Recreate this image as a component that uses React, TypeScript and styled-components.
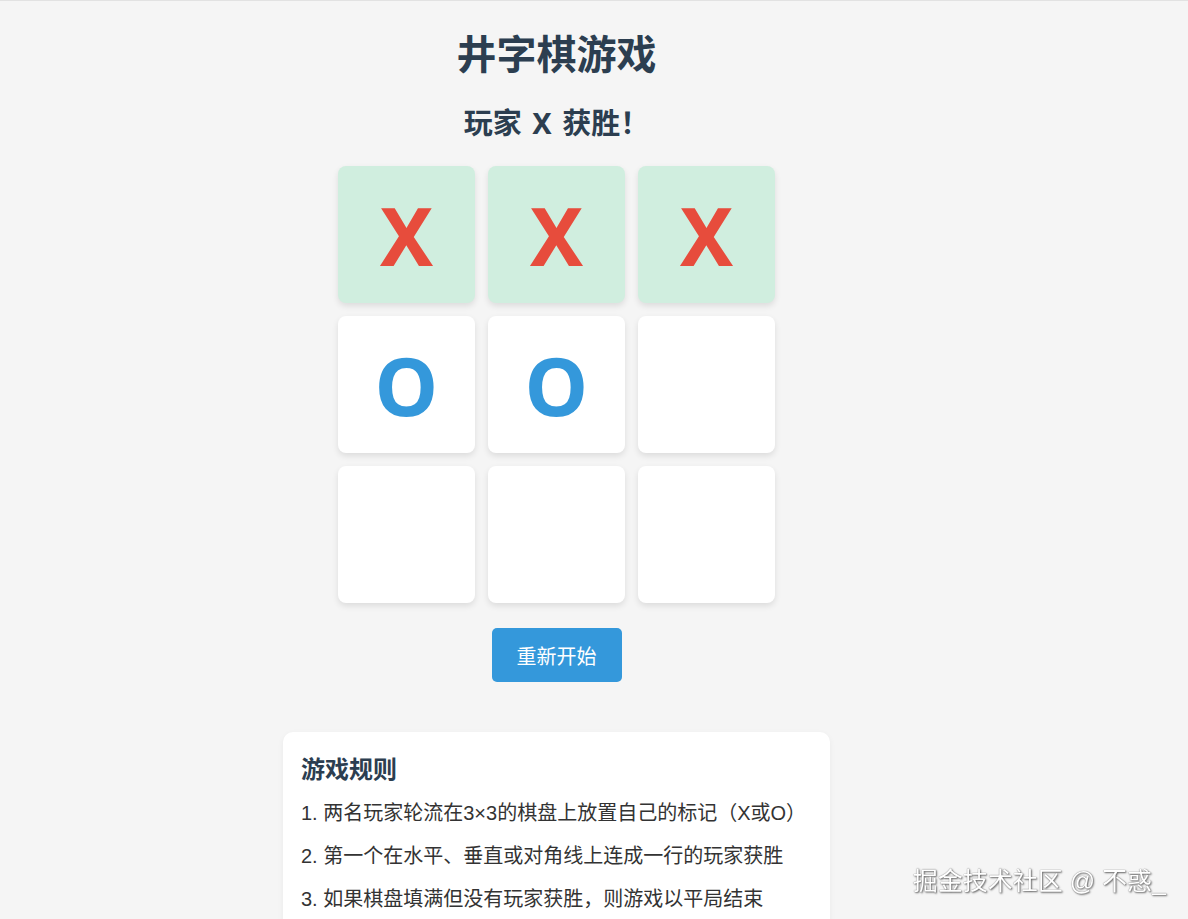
import React from "react";
import styled, { createGlobalStyle } from "styled-components";

const GlobalStyle = createGlobalStyle`
  html, body {
    margin: 0;
    padding: 0;
    background: #f5f5f5;
  }
  body {
    border-top: 1px solid #e2e2e2;
    font-family: "Noto Sans", "Noto Sans CJK SC", sans-serif;
    color: #333;
  }
  * { box-sizing: border-box; }
`;

const Page = styled.div`
  width: 1113px;
  display: flex;
  flex-direction: column;
  align-items: center;
  padding-top: 27px;
  padding-bottom: 40px;
`;

const Title = styled.h1`
  margin: 0;
  font-size: 40px;
  line-height: 48px;
  font-weight: 700;
  color: #2c3e50;
  font-family: "Noto Sans CJK SC", sans-serif;
`;

const Status = styled.div`
  margin-top: 31px;
  font-size: 29px;
  line-height: 32px;
  font-weight: 700;
  word-spacing: 3px;
  color: #2c3e50;
  font-family: "Noto Sans", "Noto Sans CJK SC", sans-serif;
`;

const Board = styled.div`
  margin-top: 27px;
  display: grid;
  grid-template-columns: repeat(3, 137px);
  grid-auto-rows: 137px;
  gap: 13px;
`;

const Cell = styled.div<{ $win?: boolean; $mark?: string }>`
  display: flex;
  align-items: center;
  justify-content: center;
  border-radius: 8px;
  background: ${(p) => (p.$win ? "#d0eedf" : "#ffffff")};
  box-shadow: 0 3px 6px rgba(0, 0, 0, 0.1);
  font-family: "Noto Sans", sans-serif;
  font-size: 80px;
  font-weight: 700;
  line-height: 1;
  color: ${(p) => (p.$mark === "X" ? "#e74c3c" : "#3498db")};
`;

const Restart = styled.button`
  margin-top: 25px;
  width: 130px;
  height: 54px;
  border: none;
  border-radius: 5px;
  background: #3498db;
  color: #fff;
  font-family: "Noto Sans CJK SC", sans-serif;
  font-size: 20px;
  cursor: pointer;
`;

const Rules = styled.section`
  margin-top: 50px;
  width: 547px;
  background: #fff;
  border-radius: 10px;
  padding: 21px 18px 20px;
  box-shadow: 0 2px 6px rgba(0, 0, 0, 0.05);
`;

const RulesTitle = styled.h3`
  margin: 0 0 16px;
  font-size: 24px;
  line-height: 29px;
  font-weight: 700;
  color: #2c3e50;
  font-family: "Noto Sans CJK SC", sans-serif;
`;

const RuleItem = styled.p`
  margin: 0 0 13px;
  font-size: 20px;
  line-height: 30px;
  color: #333;
  font-family: "Liberation Sans", "Noto Sans CJK SC", sans-serif;
`;

const Watermark = styled.div`
  position: fixed;
  right: 22px;
  bottom: 22px;
  font-size: 25px;
  line-height: 32px;
  color: #fff;
  font-family: "Liberation Sans", "Noto Sans CJK SC", sans-serif;
  text-shadow: 0 0 1px #555, 1px 1px 2px rgba(0, 0, 0, 0.6);
  pointer-events: none;
`;

const board = ["X", "X", "X", "O", "O", "", "", "", ""];
const winLine = [0, 1, 2];

export default function App() {
  return (
    <>
      <GlobalStyle />
      <Page>
        <Title>井字棋游戏</Title>
        <Status>玩家 X 获胜！</Status>
        <Board>
          {board.map((m, i) => (
            <Cell key={i} $win={winLine.includes(i)} $mark={m}>
              {m}
            </Cell>
          ))}
        </Board>
        <Restart>重新开始</Restart>
        <Rules>
          <RulesTitle>游戏规则</RulesTitle>
          <RuleItem>1. 两名玩家轮流在3×3的棋盘上放置自己的标记（X或O）</RuleItem>
          <RuleItem>2. 第一个在水平、垂直或对角线上连成一行的玩家获胜</RuleItem>
          <RuleItem>3. 如果棋盘填满但没有玩家获胜，则游戏以平局结束</RuleItem>
        </Rules>
      </Page>
      <Watermark>掘金技术社区 @ 不惑_</Watermark>
    </>
  );
}
